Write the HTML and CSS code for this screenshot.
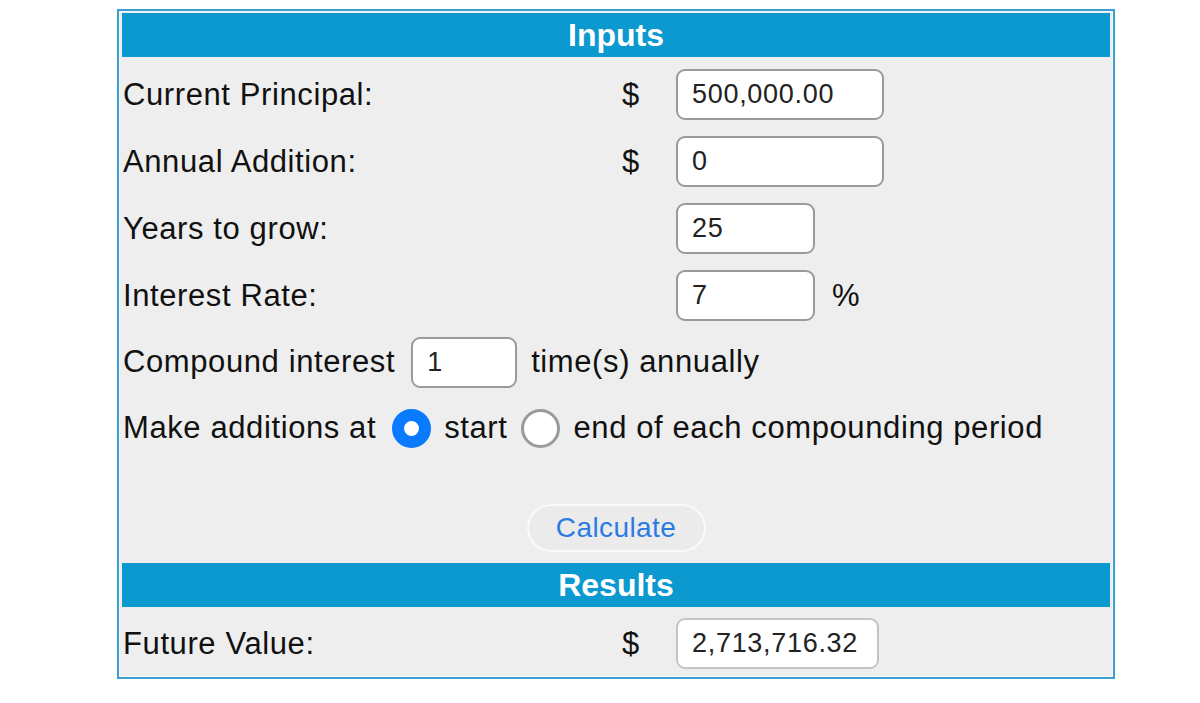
FILE: index.html
```html
<!DOCTYPE html>
<html lang="en">
<head>
    <meta charset="UTF-8">
    <meta name="viewport" content="width=device-width, initial-scale=1.0">
    <title>Compound Interest Calculator</title>
    <link rel="stylesheet" href="styles.css">
</head>
<body>
    <div class="calc">
        <div class="bar">Inputs</div>

        <div class="row">
            <span class="label">Current Principal:</span>
            <span class="cur">$</span>
            <span><input class="box wide" type="text" value="500,000.00"></span>
        </div>
        <div class="row">
            <span class="label">Annual Addition:</span>
            <span class="cur">$</span>
            <span><input class="box wide" type="text" value="0"></span>
        </div>
        <div class="row">
            <span class="label">Years to grow:</span>
            <span class="cur"></span>
            <span><input class="box short" type="text" value="25"></span>
        </div>
        <div class="row">
            <span class="label">Interest Rate:</span>
            <span class="cur"></span>
            <span class="with-unit"><input class="box short" type="text" value="7"><span class="unit">%</span></span>
        </div>

        <div class="line compound">
            <span>Compound interest</span>
            <input class="box tiny" type="text" value="1">
            <span>time(s) annually</span>
        </div>
        <div class="line additions">
            <span>Make additions at</span>
            <label class="opt"><input type="radio" name="when" checked> start</label>
            <label class="opt"><input type="radio" name="when"> end of each compounding period</label>
        </div>

        <div class="actions">
            <button class="calc-btn">Calculate</button>
        </div>

        <div class="bar results">Results</div>
        <div class="row last">
            <span class="label">Future Value:</span>
            <span class="cur">$</span>
            <span><input class="box result" type="text" value="2,713,716.32" readonly></span>
        </div>
    </div>
</body>
</html>
```

FILE: styles.css
```css
body {
    margin: 0;
    background: #fff;
    font-family: "Liberation Sans", Arial, sans-serif;
    color: #111;
}
.calc {
    box-sizing: border-box;
    width: 998px;
    margin: 9px 0 0 117px;
    border: 2px solid #3a9fd1;
    background: #eeeeee;
    padding: 2px 3px 0 3px;
    box-shadow: inset 0 0 0 1px #f6f6f6;
}
.bar {
    height: 44px;
    background: #0b99cf;
    color: #fff;
    font-weight: bold;
    font-size: 32px;
    text-align: center;
    line-height: 44px;
}
.results {
    margin-top: 5px;
}
.row {
    display: grid;
    grid-template-columns: 480px 58px 1fr;
    align-items: center;
    height: 67px;
    font-size: 31px;
    letter-spacing: 0.6px;
}
.row:nth-child(2) {
    margin-top: 4px;
}
.row.last {
    margin-top: 3px;
    height: 67px;
}
.label {
    padding-left: 1px;
}
.cur {
    text-align: center;
}
.box {
    box-sizing: border-box;
    height: 51px;
    border: 2px solid #9a9a9a;
    border-radius: 9px;
    background: #fff;
    padding: 0 0 0 14px;
    font-family: inherit;
    font-size: 27px;
    letter-spacing: 0.7px;
    color: #222;
    margin: 0;
    outline: none;
}
.row .box {
    margin-left: 16px;
}
.wide {
    width: 208px;
}
.short {
    width: 139px;
}
.tiny {
    width: 106px;
}
.result {
    width: 203px;
    border-color: #c4c4c4;
}
.with-unit {
    display: flex;
    align-items: center;
}
.unit {
    margin-left: 17px;
}
.line {
    display: flex;
    align-items: center;
    height: 66px;
    font-size: 31px;
    letter-spacing: 0.6px;
    padding-left: 1px;
}
.compound .box {
    margin: 0 14px 0 16px;
}
.opt {
    display: flex;
    align-items: center;
}
.opt input {
    -webkit-appearance: none;
    appearance: none;
    box-sizing: border-box;
    width: 39px;
    height: 39px;
    border-radius: 50%;
    border: 3px solid #9a9a9a;
    background: #fff;
    margin: 0 13px 0 0;
}
.opt input:checked {
    border: 12px solid #0a7aff;
}
.additions .opt:first-of-type {
    margin-left: 16px;
    margin-right: 14px;
}
.actions {
    height: 60px;
    margin-top: 37px;
    display: flex;
    justify-content: center;
    align-items: center;
}
.calc-btn {
    box-sizing: border-box;
    width: 179px;
    height: 48px;
    border-radius: 24px;
    border: 2px solid #fafafa;
    background: #ebebeb;
    color: #2b7be5;
    font-family: inherit;
    font-size: 28px;
    letter-spacing: 0.4px;
    cursor: pointer;
}
```
